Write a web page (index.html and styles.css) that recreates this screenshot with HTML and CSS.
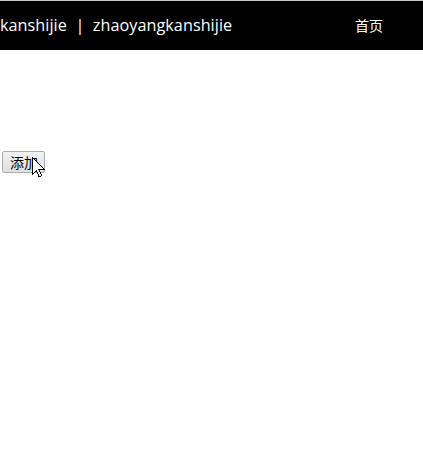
FILE: index.html
```html
<!DOCTYPE html>
<html>
<head>
<meta charset="utf-8">
<link rel="stylesheet" href="styles.css">
</head>
<body>
<header class="topbar">
  <div class="brand">kanshijie&nbsp; | &nbsp;zhaoyangkanshijie</div>
  <nav class="nav"><a class="nav-link">首页</a></nav>
</header>
<main class="content">
  <button class="btn">添加</button>
</main>
<svg class="cursor" width="14" height="22" viewBox="0 0 14 22" shape-rendering="crispEdges">
  <path d="M0.5 0.5 V17.5 L4.5 13.5 L7 19.5 H8 L9.5 18.5 L7 12.5 H12.5 Z" fill="#ffffff" stroke="#000000" stroke-width="1"/>
</svg>
</body>
</html>
```
FILE: styles.css
```css
html, body {
  margin: 0;
  padding: 0;
  background: #fff;
}
body {
  position: relative;
  min-height: 100vh;
  font-family: "Open Sans", "Noto Sans CJK SC", sans-serif;
}
.topbar {
  border-top: 1px solid #c8c8c8;
  height: 49px;
  background: #000;
  color: #fff;
  display: flex;
  align-items: center;
}
.brand {
  font-size: 16.2px;
  letter-spacing: 0.05px;
  white-space: nowrap;
  margin-top: -1px;
}
.nav {
  margin-left: auto;
  padding-right: 40px;
  margin-top: -1px;
}
.nav-link {
  font-family: "Noto Sans CJK SC", sans-serif;
  font-size: 14px;
  color: #fff;
}
.content {
  padding-top: 101px;
  padding-left: 2px;
}
.btn {
  display: block;
  font-family: "Noto Sans CJK SC", sans-serif;
  font-size: 14px;
  line-height: 18px;
  height: 22px;
  padding: 0 6px 0 7px;
  border: 1px solid #adadad;
  border-radius: 2px;
  background: linear-gradient(#f2f2f2, #e0e0e0);
  color: #000;
  margin: 0;
}
.cursor {
  position: absolute;
  display: block;
  z-index: 2;
  left: 32px;
  top: 157px;
}
```
